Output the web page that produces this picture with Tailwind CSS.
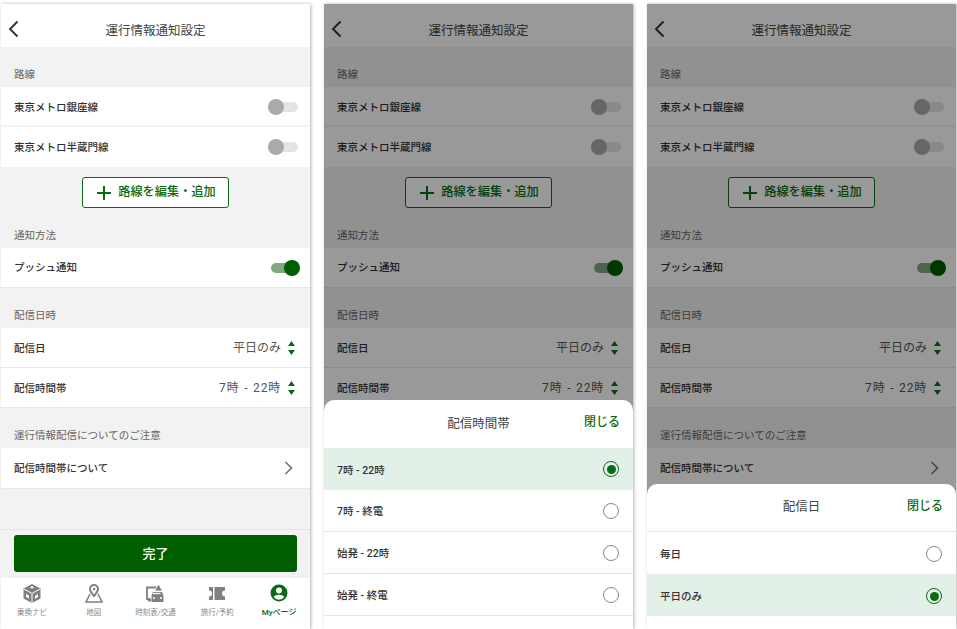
<!DOCTYPE html>
<html lang="ja">
<head>
    <meta charset="UTF-8">
    <title>運行情報通知設定</title>
    <script src="https://cdn.jsdelivr.net/npm/@tailwindcss/browser@4"></script>
</head>
<body class="bg-white overflow-hidden font-['Roboto','Noto_Sans_CJK_JP',sans-serif] text-[#333]">
    <div class="flex gap-[14px] pl-[1px] pt-[4px] h-[629px]">
        <div id="phone1" data-screen class="relative w-[309px] h-[625px] overflow-hidden bg-[#f2f2f2] shadow-[1px_0_3px_rgba(0,0,0,0.3)]"></div>

        <div id="phone2" data-screen class="relative w-[309px] h-[625px] overflow-hidden bg-[#f2f2f2] shadow-[1px_0_3px_rgba(0,0,0,0.3)]">
            <div class="absolute inset-0 z-10 bg-black/40"></div>
            <!-- Time sheet -->
            <div class="absolute z-20 left-0 right-0 top-[396px] bottom-0 bg-white rounded-t-[10px]">
                <div class="relative h-[48px] flex items-center justify-center text-[12.5px] text-[#444]">
                    <span>配信時間帯</span>
                    <span class="absolute right-[13px] top-[13px] text-[12px] font-medium text-[#0b6b14]">閉じる</span>
                </div>
                <div class="h-[42px] pl-[13px] pr-[14px] flex items-center justify-between bg-[#e2f0e7] text-[10.5px] font-medium">
                    <span class="mt-[3px]">7時 - 22時</span>
                    <span class="w-[16px] h-[16px] rounded-full border-[1.5px] border-[#0b6b14] flex items-center justify-center"><span class="w-[9px] h-[9px] rounded-full bg-[#0b6b14]"></span></span>
                </div>
                <div class="h-[42px] pl-[13px] pr-[14px] flex items-center justify-between border-b border-[#e4e4e4] text-[10.5px] font-medium">
                    <span class="mt-[3px]">7時 - 終電</span>
                    <span class="w-[16px] h-[16px] mt-[1px] rounded-full border-[1.5px] border-[#888]"></span>
                </div>
                <div class="h-[42px] pl-[13px] pr-[14px] flex items-center justify-between border-b border-[#e4e4e4] text-[10.5px] font-medium">
                    <span class="mt-[3px]">始発 - 22時</span>
                    <span class="w-[16px] h-[16px] mt-[1px] rounded-full border-[1.5px] border-[#888]"></span>
                </div>
                <div class="h-[42px] pl-[13px] pr-[14px] flex items-center justify-between border-b border-[#e4e4e4] text-[10.5px] font-medium">
                    <span class="mt-[3px]">始発 - 終電</span>
                    <span class="w-[16px] h-[16px] mt-[1px] rounded-full border-[1.5px] border-[#888]"></span>
                </div>
            </div>
        </div>

        <div id="phone3" data-screen class="relative w-[309px] h-[625px] overflow-hidden bg-[#f2f2f2] shadow-[1px_0_3px_rgba(0,0,0,0.3)]">
            <div class="absolute inset-0 z-10 bg-black/40"></div>
            <!-- Day sheet -->
            <div class="absolute z-20 left-0 right-0 top-[480px] bottom-0 bg-white rounded-t-[10px]">
                <div class="relative h-[48px] flex items-center justify-center border-b border-[#e4e4e4] text-[12.5px] text-[#444]">
                    <span>配信日</span>
                    <span class="absolute right-[13px] top-[13px] text-[12px] font-medium text-[#0b6b14]">閉じる</span>
                </div>
                <div class="h-[42px] pl-[13px] pr-[14px] flex items-center justify-between text-[10.5px] font-medium">
                    <span class="mt-[3px]">毎日</span>
                    <span class="w-[16px] h-[16px] mt-[2px] rounded-full border-[1.5px] border-[#888]"></span>
                </div>
                <div class="h-[42px] pl-[13px] pr-[14px] flex items-center justify-between bg-[#e2f0e7] text-[10.5px] font-medium">
                    <span class="mt-[3px]">平日のみ</span>
                    <span class="w-[16px] h-[16px] mt-[2px] rounded-full border-[1.5px] border-[#0b6b14] flex items-center justify-center"><span class="w-[9px] h-[9px] rounded-full bg-[#0b6b14]"></span></span>
                </div>
            </div>
        </div>
    </div>

    <!-- Settings screen, the same behind all three phones -->
    <template id="settings">
        <div class="h-full flex flex-col">
            <div class="relative h-[43px] shrink-0 bg-white flex items-center justify-center text-[12.5px] text-[#444]">
                <svg class="absolute left-[7px] top-[16px]" width="11" height="18" viewBox="0 0 11 18" fill="none" stroke="#333" stroke-width="1.9"><path d="M9.5 1.5 2 9l7.5 7.5"/></svg>
                <span class="mt-[12px]">運行情報通知設定</span>
            </div>

            <div class="h-[40px] px-[13px] pb-[4px] flex items-end text-[10.5px] text-[#666]">路線</div>
            <div class="h-[40px] pl-[13px] pr-[12px] pt-[2px] flex items-center justify-between bg-white border-b-2 border-[#f2f2f2] text-[10.5px] font-medium">
                <span class="mt-[2px]">東京メトロ銀座線</span>
                <span class="relative w-[30px] h-[10px] rounded-full bg-[#e4e4e4]"><span class="absolute left-0 -top-[3px] w-[16px] h-[16px] rounded-full bg-[#aaa]"></span></span>
            </div>
            <div class="h-[40px] pl-[13px] pr-[12px] flex items-center justify-between bg-white text-[10.5px] font-medium">
                <span class="mt-[2px]">東京メトロ半蔵門線</span>
                <span class="relative w-[30px] h-[10px] rounded-full bg-[#e4e4e4]"><span class="absolute left-0 -top-[3px] w-[16px] h-[16px] rounded-full bg-[#aaa]"></span></span>
            </div>

            <div class="pt-[10px] flex justify-center">
                <div class="w-[147px] h-[31px] pl-[2px] rounded-[3px] border border-[#0b6b14] bg-white flex items-center justify-center gap-[7px] text-[12.2px] font-medium text-[#0b6b14]">
                    <svg width="14" height="14" viewBox="0 0 14 14" stroke="#0b6b14" stroke-width="2"><path d="M7 0v14M0 7h14"/></svg>
                    <span>路線を編集・追加</span>
                </div>
            </div>

            <div class="h-[40px] px-[13px] pb-[4px] flex items-end text-[10.5px] text-[#666]">通知方法</div>
            <div class="h-[40px] px-[13px] flex items-center justify-between bg-white border-b border-[#e8e8e8] text-[10.5px] font-medium">
                <span>プッシュ通知</span>
                <span class="relative w-[27px] h-[10px] mr-[-1px] rounded-full bg-[#7fa97f]"><span class="absolute -right-[2px] -top-[3px] w-[16px] h-[16px] rounded-full bg-[#005f00]"></span></span>
            </div>

            <div class="h-[40px] px-[13px] pb-[4px] flex items-end text-[10.5px] text-[#666]">配信日時</div>
            <div class="h-[40px] pl-[13px] pr-[15px] flex items-center justify-between bg-white border-b border-[#e8e8e8] text-[10.5px] font-medium">
                <span class="mt-[2px]">配信日</span>
                <span class="flex items-center gap-[7px] text-[12px] font-normal text-[#555]">平日のみ
                    <svg width="7" height="14" viewBox="0 0 7 14" fill="#0b6b14"><path d="M3.500 0 7 5H0zM3.500 14 0 9h7z"/></svg>
                </span>
            </div>
            <div class="h-[40px] pl-[13px] pr-[15px] flex items-center justify-between bg-white border-b border-[#e8e8e8] text-[10.5px] font-medium">
                <span class="mt-[2px]">配信時間帯</span>
                <span class="flex items-center gap-[7px] text-[12px] font-normal text-[#555]"><span class="tracking-[0.8px] [word-spacing:1px]">7時 - 22時</span>
                    <svg width="7" height="14" viewBox="0 0 7 14" fill="#0b6b14"><path d="M3.500 0 7 5H0zM3.500 14 0 9h7z"/></svg>
                </span>
            </div>

            <div class="h-[40px] px-[13px] pb-[4px] flex items-end text-[10.5px] text-[#666]">運行情報配信についてのご注意</div>
            <div class="h-[41px] px-[13px] flex items-center justify-between bg-white border-b border-[#e8e8e8] text-[10.5px] font-medium">
                <span class="mt-[2px]">配信時間帯について</span>
                <svg class="mr-[4px]" width="9" height="14" viewBox="0 0 9 14" fill="none" stroke="#777" stroke-width="1.7"><path d="M1.500 1 7.500 7l-6 6"/></svg>
            </div>

            <div class="flex-1"></div>

            <div class="h-[49px] shrink-0 border-t border-[#e4e4e4] px-[13px] pt-[5px]">
                <div class="h-[37px] rounded-[3px] bg-[#005f00] flex items-center justify-center text-[13px] font-medium text-white">完了</div>
            </div>

            <!-- Tab bar -->
            <div class="h-[51px] shrink-0 bg-white grid grid-cols-5 pt-[6px] text-[7.5px] text-[#888]">
                <div class="flex flex-col items-center gap-[4px]">
                    <svg width="18" height="19" viewBox="0 0 18 19"><path d="M9 0 17.500 4.500v10L9 19 .5 14.500v-10z" fill="#808080"/><path d="M1 5l8 4.500L17 5M9 9.500V19" stroke="#fff" stroke-width="1" fill="none"/><path d="M7 3.500 9 2l2 1.500-2 1.200zM3 10l3 1.500v3L3 13zM12 12l3-2v3l-3 2z" fill="#fff"/></svg>
                    <span>乗換ナビ</span>
                </div>
                <div class="flex flex-col items-center gap-[4px]">
                    <svg width="18" height="19" viewBox="0 0 18 19" fill="none" stroke="#808080" stroke-width="1.600"><path d="M5 10 1 18h16l-4-8"/><path d="M9 12C6.500 9 5 7.200 5 5a4 4 0 0 1 8 0c0 2.200-1.500 4-4 7z" fill="#fff" stroke-width="2"/><circle cx="9" cy="5" r="1.300" fill="#808080" stroke="none"/></svg>
                    <span>地図</span>
                </div>
                <div class="flex flex-col items-center gap-[4px]">
                    <svg width="18" height="19" viewBox="0 0 18 19" fill="none" stroke="#808080" stroke-width="1.800"><path d="M11 3.500H1v11.500h3"/><circle cx="3.500" cy="16" r="1.700" fill="#808080" stroke="none"/><path d="M5.500 18v-6l1.500-4h9l1.500 4v6z" fill="#808080" stroke="none"/><path d="M12.500 0 8.500 7h8z" fill="#808080" stroke="#fff" stroke-width=".8"/><path d="M7 9.500h7.500" stroke="#fff" stroke-width="1.200"/><circle cx="8" cy="14" r="1" fill="#fff" stroke="none"/><circle cx="15" cy="14" r="1" fill="#fff" stroke="none"/></svg>
                    <span>時刻表/交通</span>
                </div>
                <div class="flex flex-col items-center gap-[4px]">
                    <svg width="18" height="19" viewBox="0 0 18 19" fill="#808080"><path d="M1 3h4v13H1v-3.500a2 2 0 0 0 0-6zM6.500 3H17v3.500a2 2 0 0 0 0 6V16H6.500z"/></svg>
                    <span>旅行/予約</span>
                </div>
                <div class="flex flex-col items-center gap-[4px] text-[8px] font-medium text-[#0b6b14]">
                    <svg width="18" height="19" viewBox="0 0 18 19" fill="#0b6b14"><path d="M9 .5a8.500 8.500 0 1 0 0 17 8.500 8.500 0 0 0 0-17zm0 3a3 3 0 1 1 0 6 3 3 0 0 1 0-6zm0 12.300a6.600 6.600 0 0 1-5.300-2.700c.8-1.600 3.300-2.300 5.300-2.300s4.500.7 5.300 2.300A6.600 6.600 0 0 1 9 15.800z"/></svg>
                    <span>Myページ</span>
                </div>
            </div>
        </div>
    </template>

    <script>
        const settings = document.getElementById('settings');
        document.querySelectorAll('[data-screen]').forEach(phone => {
            phone.prepend(settings.content.cloneNode(true));
        });
    </script>
</body>
</html>
